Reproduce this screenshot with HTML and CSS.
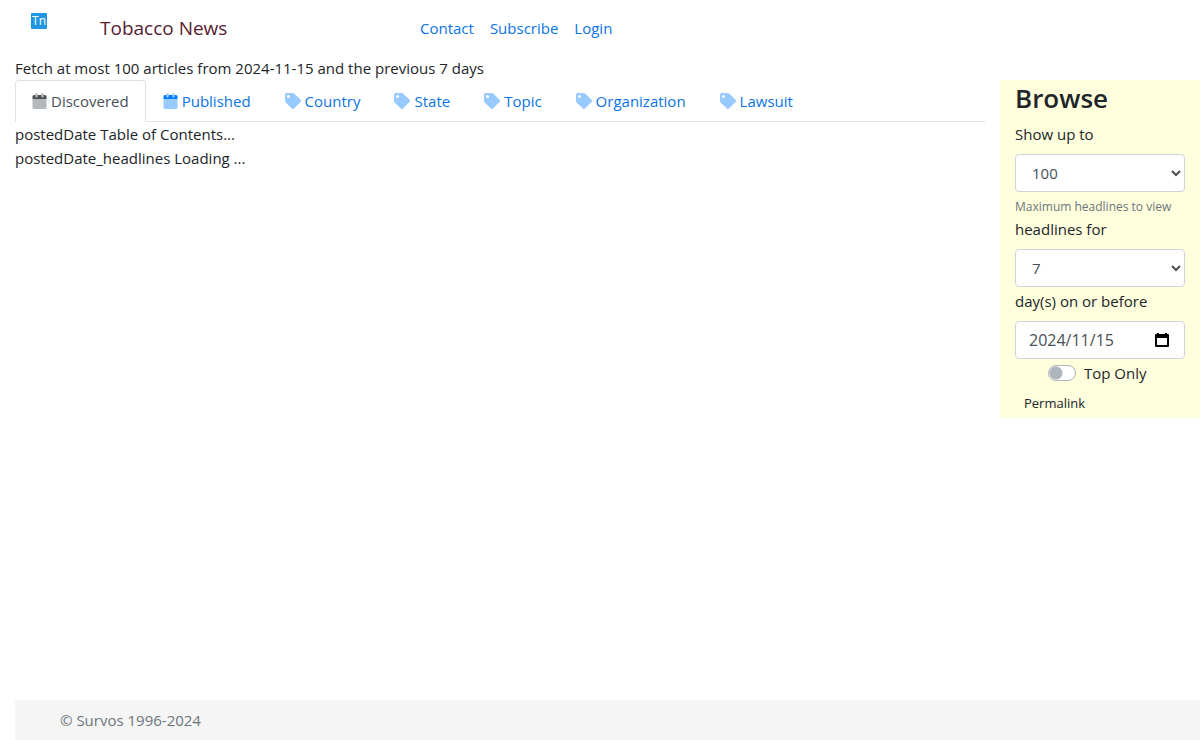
FILE: index.html
```html
<!DOCTYPE html>
<html lang="en">
<head>
<meta charset="utf-8">
<title>Tobacco News</title>
<link rel="stylesheet" href="styles.css">
</head>
<body>
<svg class="sprite" aria-hidden="true">
  <symbol id="calendar" viewBox="0 0 448 512">
    <path opacity=".4" d="M0 192v272a48 48 0 0 0 48 48h352a48 48 0 0 0 48-48V192z"/>
    <path d="M448 112v80H0v-80a48 48 0 0 1 48-48h48v48a32 32 0 0 0 64 0V64h128v48a32 32 0 0 0 64 0V64h48a48 48 0 0 1 48 48z"/>
    <path opacity=".4" d="M112 0h32a16 16 0 0 1 16 16v96a32 32 0 0 1-64 0V16a16 16 0 0 1 16-16zm192 0h32a16 16 0 0 1 16 16v96a32 32 0 0 1-64 0V16a16 16 0 0 1 16-16z"/>
  </symbol>
  <symbol id="tag" viewBox="0 0 512 512">
    <path opacity=".4" d="M498 286 286 498a48 48 0 0 1-68 0L14 294A48 48 0 0 1 0 260V48A48 48 0 0 1 48 0h212a48 48 0 0 1 34 14l204 204a48 48 0 0 1 0 68zM112 64a48 48 0 1 0 0 96 48 48 0 0 0 0-96z"/>
  </symbol>
</svg>

<header class="header">
  <a class="logo" href="#" aria-label="Home">Tn</a>
  <a class="brand" href="#">Tobacco News</a>
  <nav class="links">
    <a href="#">Contact</a>
    <a href="#">Subscribe</a>
    <a href="#">Login</a>
  </nav>
</header>

<p class="summary">Fetch at most 100 articles from 2024-11-15 and the previous 7 days</p>

<div class="columns">
  <main class="main">
    <nav class="tabs">
      <a class="tab active" href="#"><svg class="icon cal"><use href="#calendar"/></svg>Discovered</a>
      <a class="tab" href="#"><svg class="icon cal"><use href="#calendar"/></svg>Published</a>
      <a class="tab" href="#"><svg class="icon"><use href="#tag"/></svg>Country</a>
      <a class="tab" href="#"><svg class="icon"><use href="#tag"/></svg>State</a>
      <a class="tab" href="#"><svg class="icon"><use href="#tag"/></svg>Topic</a>
      <a class="tab" href="#"><svg class="icon"><use href="#tag"/></svg>Organization</a>
      <a class="tab" href="#"><svg class="icon"><use href="#tag"/></svg>Lawsuit</a>
    </nav>
    <div>postedDate Table of Contents...</div>
    <div>postedDate_headlines Loading ...</div>
  </main>

  <aside class="browse">
    <h2 class="title">Browse</h2>
    <form>
      <label class="label" for="limit">Show up to</label>
      <select class="control" id="limit" aria-describedby="limit-help"><option>100</option></select>
      <small class="help" id="limit-help">Maximum headlines to view</small>
      <label class="label" for="days">headlines for</label>
      <select class="control" id="days"><option>7</option></select>
      <label class="label" for="date">day(s) on or before</label>
      <div class="date">
        <input class="control" id="date" type="text" value="2024/11/15">
        <button class="picker" type="button" aria-label="Choose date">
          <svg viewBox="0 0 14 14" width="14" height="14"><path fill-rule="evenodd" d="M2 0h2v1h6V0h2v1h1a1 1 0 0 1 1 1v11a1 1 0 0 1-1 1H1a1 1 0 0 1-1-1V2a1 1 0 0 1 1-1h1zM2 5v7h10V5z"/></svg>
        </button>
      </div>
      <div class="toggle">
        <input class="switch" id="top" type="checkbox">
        <label for="top">Top Only</label>
      </div>
      <a class="permalink" href="#">Permalink</a>
    </form>
  </aside>
</div>

<footer class="footer">© Survos 1996-2024</footer>
</body>
</html>
```
FILE: styles.css
```css
* { box-sizing: border-box; }

body {
  display: flex;
  flex-direction: column;
  min-height: 100vh;
  margin: 0;
  font: 15px/24px "Open Sans", "Noto Sans", sans-serif;
  color: #212529;
  background: #fff;
}

a { color: #0b74e5; text-decoration: none; }

.sprite { position: absolute; width: 0; height: 0; }

.header {
  display: grid;
  grid-template-columns: 69px 320px 1fr;
  align-items: center;
  height: 56px;
  padding-left: 31px;
}

.logo {
  align-self: start;
  width: 16px;
  height: 16px;
  margin-top: 13px;
  border-radius: 1px;
  background: #2196e3;
  color: #fff;
  font-size: 12px;
  line-height: 16px;
  text-align: center;
}

.brand { color: #56202f; font-size: 19px; }

.links { display: flex; gap: 16px; }

.summary { margin: 0 15px; }

.columns {
  display: grid;
  grid-template-columns: 5fr 1fr;
  align-items: start;
}

.main { padding: 0 15px; }

.tabs {
  display: flex;
  border-bottom: 1px solid #dee2e6;
}

.tab {
  display: flex;
  align-items: center;
  gap: 4px;
  margin-bottom: -1px;
  padding: 8px 16px;
  border: 1px solid transparent;
  border-radius: 4px 4px 0 0;
}

.tab.active {
  color: #495057;
  border-color: #dee2e6 #dee2e6 #fff;
  background: #fff;
}

.icon { width: 16px; height: 16px; fill: currentColor; }
.tab:not(.active) .icon { fill: #007bff; }
.cal { width: 15px; }

.browse {
  padding: 0 15px;
  background: #ffffdd;
}

.title {
  margin: 0 0 6px;
  font-size: 26px;
  font-weight: 600;
  line-height: 36px;
}

.label { display: block; margin-bottom: 8px; }

.control {
  display: block;
  width: 100%;
  height: 38px;
  padding: 6px 12px;
  border: 1px solid #ced4da;
  border-radius: 4px;
  background: #fff;
  color: #495057;
  font: inherit;
}

.help {
  display: block;
  margin-top: 4px;
  color: #6c757d;
  font-size: 12px;
  line-height: 21px;
  white-space: nowrap;
}

select.control + .label { margin-top: 2px; }

.date { position: relative; }
.date .control { padding-left: 13px; font-size: 16px; }

.picker {
  position: absolute;
  top: 12px;
  right: 16px;
  display: flex;
  padding: 0;
  border: 0;
  background: none;
}

.toggle {
  display: flex;
  align-items: center;
  gap: 8px;
  margin: 2px 0 4px;
  padding-left: 33px;
}

.switch {
  appearance: none;
  width: 28px;
  height: 16px;
  margin: 0;
  border: 1px solid #adb5bd;
  border-radius: 8px;
  background: radial-gradient(circle at 7px 7px, #adb5bd 6px, #fff 7px);
}

.permalink {
  display: inline-block;
  padding: 4px 9px;
  color: #212529;
  font-size: 13px;
  line-height: 21px;
}

.footer {
  margin: auto 0 0 15px;
  padding-left: 45px;
  background: #f5f5f5;
  color: #6c757d;
  line-height: 40px;
}
```
